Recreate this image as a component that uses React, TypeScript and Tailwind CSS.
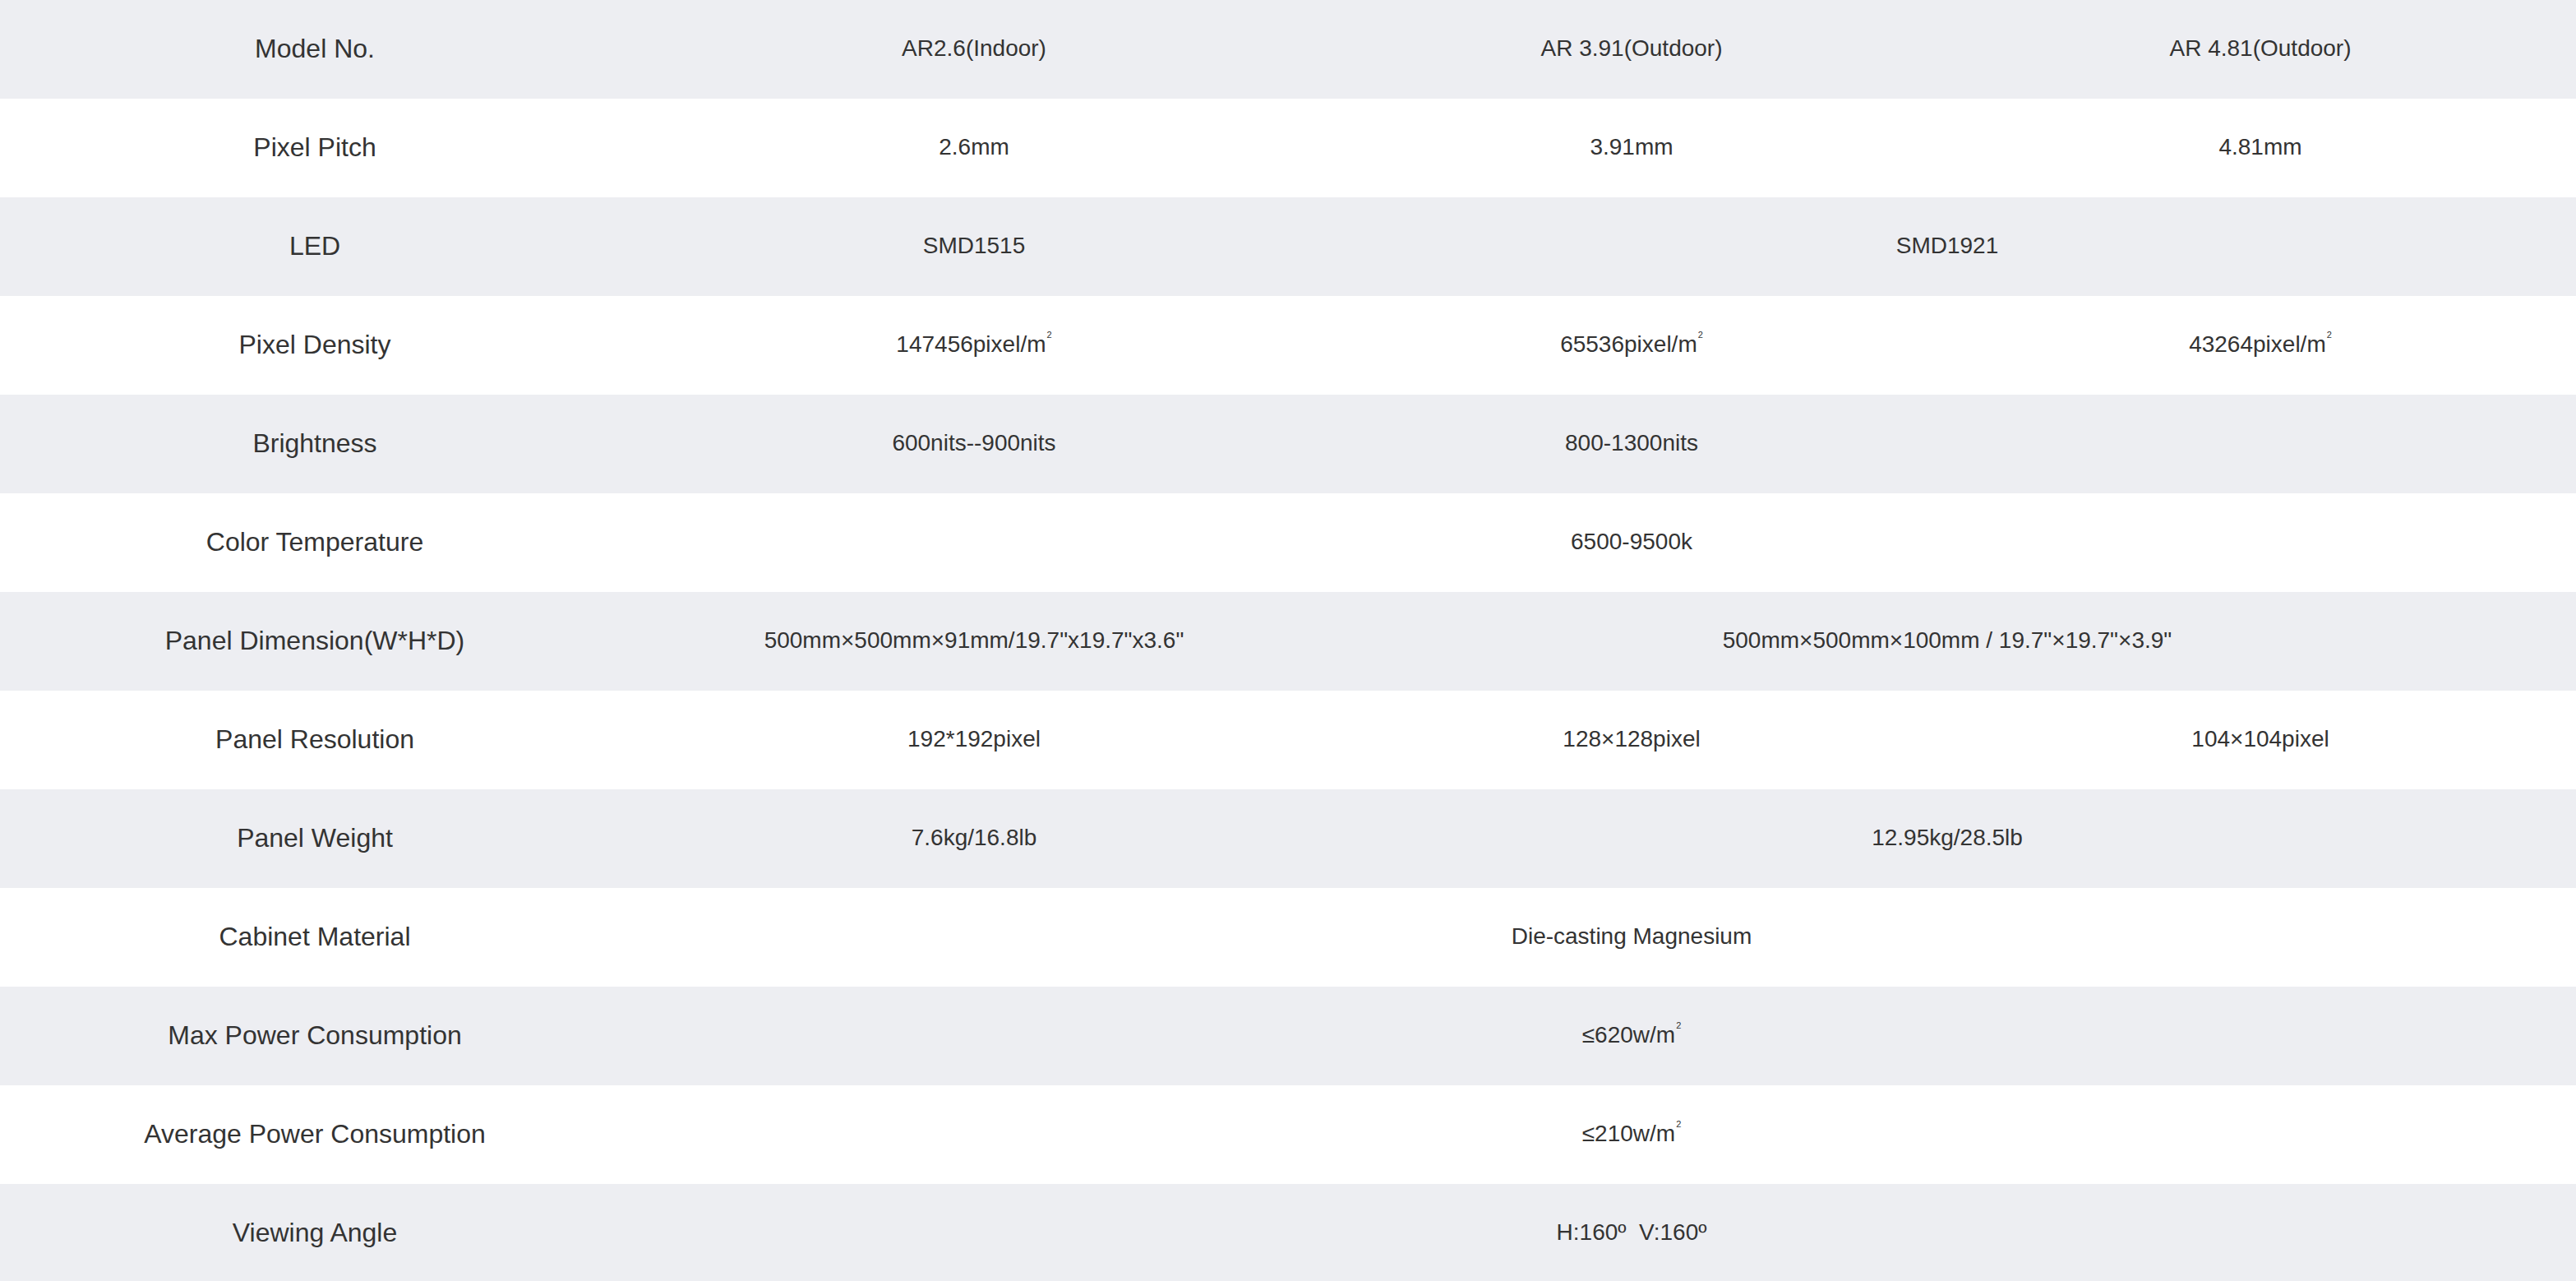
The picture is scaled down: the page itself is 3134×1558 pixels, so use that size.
const M2 = () => (
  <>
    m<sup className="relative -top-[6px] ml-[1px] align-super text-[11px] leading-none">2</sup>
  </>
);

type Cell = { v: React.ReactNode; span?: number };

const rows: { label: string; cells: Cell[] }[] = [
  { label: "Model No.", cells: [{ v: "AR2.6(Indoor)" }, { v: "AR 3.91(Outdoor)" }, { v: "AR 4.81(Outdoor)" }] },
  { label: "Pixel Pitch", cells: [{ v: "2.6mm" }, { v: "3.91mm" }, { v: "4.81mm" }] },
  { label: "LED", cells: [{ v: "SMD1515" }, { v: "SMD1921", span: 2 }] },
  {
    label: "Pixel Density",
    cells: [
      { v: <>147456pixel/<M2 /></> },
      { v: <>65536pixel/<M2 /></> },
      { v: <>43264pixel/<M2 /></> },
    ],
  },
  { label: "Brightness", cells: [{ v: "600nits--900nits" }, { v: "800-1300nits" }, { v: "" }] },
  { label: "Color Temperature", cells: [{ v: "" }, { v: "6500-9500k" }, { v: "" }] },
  {
    label: "Panel Dimension(W*H*D)",
    cells: [
      { v: '500mm×500mm×91mm/19.7"x19.7"x3.6"' },
      { v: '500mm×500mm×100mm / 19.7"×19.7"×3.9"', span: 2 },
    ],
  },
  { label: "Panel Resolution", cells: [{ v: "192*192pixel" }, { v: "128×128pixel" }, { v: "104×104pixel" }] },
  { label: "Panel Weight", cells: [{ v: "7.6kg/16.8lb" }, { v: "12.95kg/28.5lb", span: 2 }] },
  { label: "Cabinet Material", cells: [{ v: "" }, { v: "Die-casting Magnesium" }, { v: "" }] },
  { label: "Max Power Consumption", cells: [{ v: "" }, { v: <>≤620w/<M2 /></> }, { v: "" }] },
  { label: "Average Power Consumption", cells: [{ v: "" }, { v: <>≤210w/<M2 /></> }, { v: "" }] },
  { label: "Viewing Angle", cells: [{ v: "" }, { v: "H:160º  V:160º" }, { v: "" }] },
];

export default function App() {
  return (
    <div className="w-[3134px] bg-white font-['Liberation_Sans',Arial,sans-serif] text-[#333333]">
      <table className="w-full table-fixed border-collapse">
        <colgroup>
          <col className="w-[766px]" />
          <col className="w-[838px]" />
          <col className="w-[762px]" />
          <col className="w-[768px]" />
        </colgroup>
        <tbody>
          {rows.map((r, i) => (
            <tr key={r.label} className={i % 2 === 0 ? "h-[120px] bg-[#edeef2]" : "h-[120px] bg-white"}>
              <td className="pb-[3px] text-center align-middle text-[32px]">{r.label}</td>
              {r.cells.map((c, j) => (
                <td key={j} colSpan={c.span} className="whitespace-pre pb-[3px] text-center align-middle text-[28px]">
                  {c.v}
                </td>
              ))}
            </tr>
          ))}
        </tbody>
      </table>
    </div>
  );
}
